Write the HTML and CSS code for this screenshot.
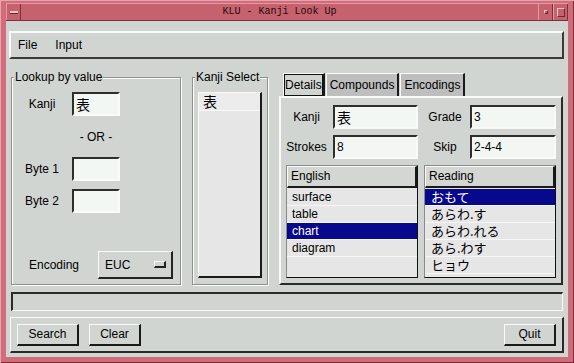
FILE: index.html
```html
<!DOCTYPE html>
<html lang="ja">
<head>
    <meta charset="UTF-8">
    <title>KLU - Kanji Look Up</title>
    <link rel="stylesheet" href="styles.css">
</head>
<body>
    <div class="window">
        <div class="titlebar">
            <div class="tb-btn"><span class="dash"></span></div>
            <div class="title">KLU - Kanji Look Up</div>
            <div class="tb-btn"><span class="dot"></span></div>
            <div class="tb-btn"><span class="box"></span></div>
        </div>

        <div class="client">
            <div class="menubar">
                <span>File</span>
                <span>Input</span>
            </div>

            <div class="main">
                <fieldset class="group lookup">
                    <legend>Lookup by value</legend>
                    <div class="field-row">
                        <label>Kanji</label>
                        <div class="entry cjk">表</div>
                    </div>
                    <div class="or">- OR -</div>
                    <div class="field-row byte1">
                        <label>Byte 1</label>
                        <div class="entry"></div>
                    </div>
                    <div class="field-row byte2">
                        <label>Byte 2</label>
                        <div class="entry"></div>
                    </div>
                    <div class="enc-row">
                        <label>Encoding</label>
                        <div class="option">EUC<span class="indicator"></span></div>
                    </div>
                </fieldset>

                <fieldset class="group select">
                    <legend>Kanji Select</legend>
                    <div class="kanji-list">
                        <div class="row cjk">表</div>
                    </div>
                </fieldset>

                <div class="notebook">
                    <div class="tabs">
                        <div class="tab active"><span>Details</span></div>
                        <div class="tab">Compounds</div>
                        <div class="tab">Encodings</div>
                    </div>
                    <div class="panel">
                        <label class="lbl-left">Kanji</label>
                        <div class="entry wide cjk">表</div>
                        <label class="lbl-right">Grade</label>
                        <div class="entry wide">3</div>

                        <label class="lbl-left">Strokes</label>
                        <div class="entry wide">8</div>
                        <label class="lbl-right">Skip</label>
                        <div class="entry wide">2-4-4</div>

                        <div class="list english">
                            <div class="list-head">English</div>
                            <div class="item">surface</div>
                            <div class="item">table</div>
                            <div class="item selected">chart</div>
                            <div class="item">diagram</div>
                        </div>
                        <div class="list reading">
                            <div class="list-head">Reading</div>
                            <div class="item jp selected">おもて</div>
                            <div class="item jp">あらわ.す</div>
                            <div class="item jp">あらわ.れる</div>
                            <div class="item jp">あら.わす</div>
                            <div class="item jp">ヒョウ</div>
                        </div>
                    </div>
                </div>
            </div>

            <div class="status"></div>

            <div class="actions">
                <button class="btn btn-search">Search</button>
                <button class="btn btn-clear">Clear</button>
                <button class="btn btn-quit">Quit</button>
            </div>
        </div>
    </div>
</body>
</html>
```

FILE: styles.css
```css
body {
    margin: 0;
    font-family: "Liberation Sans", "Noto Sans CJK JP", sans-serif;
    font-size: 12px;
    color: #000;
    background: #fff;
}

.window {
    width: 574px;
    height: 363px;
    box-sizing: border-box;
    padding: 3px 6px 6px 6px;
    background: #cf6e7a;
    box-shadow: inset 1px 1px 0 #eba4ad, inset -1px -1px 0 #7a2c36;
    display: flex;
    flex-direction: column;
}

/* title bar */

.titlebar {
    display: flex;
    height: 18px;
    box-sizing: border-box;
    background: #c5626e;
    border-top: 1px solid #e39aa4;
    border-bottom: 1px solid #7c303a;
}

.tb-btn {
    width: 15px;
    flex: none;
    box-sizing: border-box;
    display: flex;
    align-items: center;
    justify-content: center;
    border-left: 1px solid #e39aa4;
    border-right: 1px solid #7c303a;
}

.title {
    flex: 1;
    text-align: center;
    font-family: "Liberation Mono", monospace;
    font-size: 10px;
    line-height: 16px;
    color: #1c0a0c;
}

.dash {
    width: 8px;
    height: 2px;
    background: #f3c6cc;
    border-bottom: 1px solid #6e2630;
}

.dot {
    width: 2px;
    height: 2px;
    border: 1px solid;
    border-color: #f3c6cc #6e2630 #6e2630 #f3c6cc;
}

.box {
    width: 6px;
    height: 7px;
    border: 1px solid;
    border-color: #f3c6cc #6e2630 #6e2630 #f3c6cc;
}

/* client area */

.client {
    flex: 1;
    background: #d1d5d1;
    display: flex;
    flex-direction: column;
}

.menubar {
    margin: 10px 4px 0 3px;
    height: 28px;
    box-sizing: border-box;
    border: 2px solid;
    border-color: #fbfbfb #3a3a3a #3a3a3a #fbfbfb;
    display: flex;
    align-items: center;
    padding-left: 7px;
    gap: 18px;
}

.main {
    display: flex;
    height: 215px;
    margin: 11px 5px 0 5px;
    gap: 11px;
}

.group {
    margin: 0;
    padding: 0;
    min-width: 0;
    box-sizing: border-box;
    border: 1px solid #8e908e;
    box-shadow: inset 1px 1px 0 #fff, 1px 1px 0 #fff;
}

.group legend {
    margin-left: 2px;
    padding: 0 1px;
    line-height: 14px;
    white-space: nowrap;
    background: #d1d5d1;
}

.lookup {
    width: 170px;
    padding-top: 8px;
}

.field-row {
    display: flex;
    align-items: center;
    height: 24px;
}

.field-row label {
    width: 60px;
    text-align: center;
}

.byte1 {
    margin-top: 13px;
}

.byte2 {
    margin-top: 8px;
}

.entry {
    box-sizing: border-box;
    width: 48px;
    height: 24px;
    border: 2px solid;
    border-color: #2e2e2e #fafafa #fafafa #2e2e2e;
    background: #f3f7f3;
    padding-left: 2px;
    line-height: 20px;
}

.cjk {
    font-family: "Noto Sans CJK JP", sans-serif;
    font-size: 14px;
}

.or {
    margin: 14px 0 0 60px;
    width: 48px;
    text-align: center;
    line-height: 14px;
}

.enc-row {
    display: flex;
    align-items: center;
    margin: 38px 0 0 17px;
}

.enc-row label {
    width: 69px;
}

.option {
    width: 75px;
    height: 28px;
    box-sizing: border-box;
    border-style: solid;
    border-width: 1px 2px 2px 1px;
    border-color: #fafafa #222 #222 #fafafa;
    display: flex;
    align-items: center;
    justify-content: space-between;
    padding: 0 5px 0 6px;
}

.indicator {
    width: 12px;
    height: 7px;
    box-sizing: border-box;
    border-style: solid;
    border-width: 1px 2px 2px 1px;
    border-color: #fafafa #222 #222 #fafafa;
}

.select {
    width: 76px;
    padding: 8px 0 6px 0;
}

.kanji-list {
    height: 186px;
    margin: 0 5px;
    box-sizing: border-box;
    background: #e6e6e6;
    border-style: solid;
    border-width: 1px 2px 2px 1px;
    border-color: #fafafa #1a1a1a #1a1a1a #fafafa;
}

.kanji-list .row {
    height: 17px;
    line-height: 17px;
    padding-left: 4px;
    background: #ececec;
    border-bottom: 1px solid #f8f8f8;
}

/* notebook */

.notebook {
    width: 284px;
    margin-top: 3px;
    display: flex;
    flex-direction: column;
}

.tabs {
    display: flex;
    padding-left: 4px;
    gap: 1px;
    height: 23px;
}

.tab {
    box-sizing: border-box;
    border-style: solid;
    border-width: 1px 2px 0 1px;
    border-color: #fafafa #1a1a1a #1a1a1a #fafafa;
    background: #bebebe;
    padding: 0 3px;
    line-height: 22px;
}

.tab.active {
    background: #d1d5d1;
    padding: 0;
}

.tab.active span {
    display: block;
    border: 1px solid #111;
    line-height: 20px;
}

.panel {
    flex: 1;
    border: 2px solid;
    border-color: #fafafa #2a2a2a #2a2a2a #fafafa;
    padding: 7px 5px 5px 5px;
    display: grid;
    grid-template-columns: 47px 85px 52px 86px;
    grid-template-rows: 24px 24px 1fr;
    row-gap: 6px;
    align-items: center;
}

.lbl-left {
    text-align: center;
    padding-right: 6px;
}

.lbl-right {
    text-align: center;
    padding: 0 4px 0 6px;
}

.entry.wide {
    width: auto;
}

.list {
    align-self: stretch;
    box-sizing: border-box;
    background: #e6e6e6;
    border: 1px solid;
    border-color: #8a8a8a #111 #111 #8a8a8a;
    grid-column: span 2;
}

.reading {
    margin-left: 6px;
}

.list-head {
    height: 22px;
    box-sizing: border-box;
    border-style: solid;
    border-width: 1px 2px 2px 1px;
    border-color: #fafafa #1a1a1a #1a1a1a #fafafa;
    background: #d3d6d3;
    padding-left: 3px;
    line-height: 19px;
    margin-bottom: 1px;
}

.item {
    height: 17px;
    box-sizing: border-box;
    border-bottom: 1px solid #f6f6f6;
    padding-left: 5px;
    line-height: 16px;
}

.item.jp {
    font-family: "Noto Sans CJK JP", sans-serif;
    font-size: 13px;
    padding-left: 6px;
}

.item.selected {
    background: #08088c;
    color: #fff;
}

/* bottom */

.status {
    height: 19px;
    margin: 7px 5px 0 5px;
    box-sizing: border-box;
    border-style: solid;
    border-width: 2px 1px 1px 2px;
    border-color: #2a2a2a #fafafa #fafafa #2a2a2a;
}

.actions {
    margin: 6px 4px 0 4px;
    height: 36px;
    box-sizing: border-box;
    border-style: solid;
    border-width: 1px 2px 2px 1px;
    border-color: #fafafa #2a2a2a #2a2a2a #fafafa;
    display: flex;
    align-items: center;
    padding: 0 6px;
    gap: 10px;
}

.btn {
    height: 22px;
    box-sizing: border-box;
    border-style: solid;
    border-width: 1px 2px 2px 1px;
    border-color: #fafafa #1a1a1a #1a1a1a #fafafa;
    background: #d1d5d1;
    font-family: "Liberation Sans", sans-serif;
    font-size: 12px;
    color: #000;
    padding: 0;
}

.btn-search {
    width: 62px;
}

.btn-clear,
.btn-quit {
    width: 52px;
}

.btn-quit {
    margin-left: auto;
}
```
